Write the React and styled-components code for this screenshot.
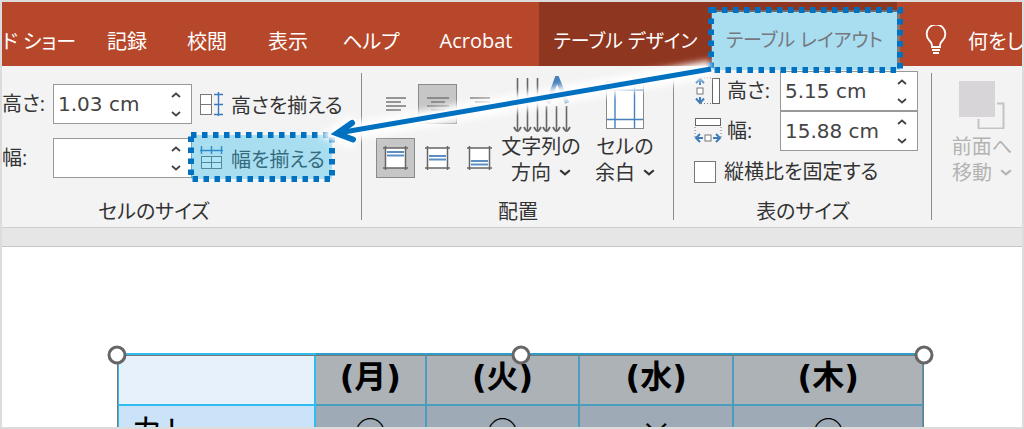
import React, { useState } from "react";
import styled, { createGlobalStyle } from "styled-components";

const TABS = ["ド ショー", "記録", "校閲", "表示", "ヘルプ", "Acrobat"];
const DAYS = ["(月)", "(火)", "(水)", "(木)"];
const MARKS = ["○", "○", "×", "○"];

function Spinner({ id, value, onChange }) {
  return (
    <SpinBox>
      <SpinInput
        id={id}
        type="text"
        value={value}
        onChange={(e) => onChange(e.target.value)}
      />
      <SpinButtons>
        <SpinButton type="button" aria-label="増やす">
          <svg width="10" height="6" viewBox="0 0 10 6">
            <path d="M1 5L5 1.5L9 5" fill="none" stroke="#444" strokeWidth="1.8" />
          </svg>
        </SpinButton>
        <SpinButton type="button" aria-label="減らす">
          <Chevron width={10} />
        </SpinButton>
      </SpinButtons>
    </SpinBox>
  );
}

function Chevron({ width = 12 }) {
  return (
    <svg width={width} height={width * 0.6} viewBox="0 0 10 6">
      <path d="M1 1L5 4.5L9 1" fill="none" stroke="currentColor" strokeWidth="1.8" />
    </svg>
  );
}

function Highlight({ inset }) {
  return (
    <HighlightBox $inset={inset} aria-hidden="true">
      <svg width="100%" height="100%">
        <rect
          width="100%"
          height="100%"
          fill="none"
          stroke="#0070c0"
          strokeWidth="6"
          strokeDasharray="5.5 5.5"
        />
      </svg>
    </HighlightBox>
  );
}

function RowsIcon() {
  return (
    <svg width="24" height="24" viewBox="0 0 24 24" fill="none">
      <rect x="1.5" y="2.5" width="11" height="20" fill="#fff" stroke="#777" />
      <path d="M1 12.5H13" stroke="#777" />
      <path d="M19.5 0V24M15 2.5H24M15 12.5H24M15 22.5H24" stroke="#3a7abf" strokeWidth="1.4" />
    </svg>
  );
}

function ColumnsIcon() {
  return (
    <svg width="24" height="24" viewBox="0 0 24 24" fill="none">
      <rect x="2.5" y="10.5" width="20" height="12" fill="#fff" stroke="#666" />
      <path d="M2 16.5H23M12.5 10V23" stroke="#666" />
      <path d="M1 4.5H24M2.5 0V8M12.5 0V8M22.5 0V8" stroke="#2a6ab5" strokeWidth="1.4" />
    </svg>
  );
}

function AlignIcon({ type }) {
  const d = {
    left: "M1 2H21M1 6H16M1 10H21M1 14H16",
    center: "M0 2H22M4 6H18M0 10H22M4 14H18",
    right: "M1 2H21M6 6H21M1 10H21M6 14H21",
  }[type];
  return (
    <svg width="22" height="16" viewBox="0 0 22 16">
      <path d={d} stroke="#777" strokeWidth="1.5" />
    </svg>
  );
}

function CellIcon({ type }) {
  const y = { top: 6, middle: 10, bottom: 15 }[type];
  return (
    <svg width="26" height="24" viewBox="0 0 26 24">
      <rect x="3" y="2" width="20" height="20" fill="#fff" />
      <path d="M0 2H25M0 22H25M2.5 0V24M22.5 0V24" stroke="#666" strokeWidth="1.5" />
      <path d={`M4 ${y}H21M4 ${y + 3.5}H21`} stroke="#5b8fc4" strokeWidth="1.8" />
    </svg>
  );
}

function DirectionIcon() {
  return (
    <svg width="60" height="58" viewBox="0 0 60 58" fill="none">
      <path d="M6.5 2V54M16.5 2V54M26.5 2V54M35.5 30V54M45.5 30V54M55.5 30V54" stroke="#666" strokeWidth="1.6" />
      <path
        d="M3 51Q5 55 6.5 55Q8 55 10 51M13 51Q15 55 16.5 55Q18 55 20 51M23 51Q25 55 26.5 55Q28 55 30 51M32 51Q34 55 35.5 55Q37 55 39 51M42 51Q44 55 45.5 55Q47 55 49 51M52 51Q54 55 55.5 55Q57 55 59 51"
        stroke="#666"
        strokeWidth="1.8"
      />
      <path d="M37 27L46 2L56 27M40 19H52" stroke="#4580ba" strokeWidth="4.5" />
    </svg>
  );
}

function MarginIcon() {
  return (
    <svg width="38" height="48" viewBox="0 0 38 48">
      <rect x="0.5" y="0.5" width="37" height="47" fill="#fff" stroke="#888" />
      <path d="M9 1V47M28.5 1V47M1 9H37M1 38.5H37" stroke="#4580ba" strokeWidth="1.4" />
    </svg>
  );
}

function HeightIcon() {
  return (
    <svg width="26" height="28" viewBox="0 0 26 28" fill="none">
      <rect x="18.5" y="1.5" width="7" height="25" fill="#fff" stroke="#666" />
      <path d="M7 1H18M7 26.5H18" stroke="#777" strokeDasharray="1 2" />
      <rect x="3" y="11" width="6" height="6" fill="#fff" stroke="#777" />
      <path d="M2 6L6 2L10 6M6 2V8M6 20V26M2 21.5L6 26L10 21.5" stroke="#3f7cba" strokeWidth="2" />
    </svg>
  );
}

function WidthIcon() {
  return (
    <svg width="28" height="26" viewBox="0 0 28 26" fill="none">
      <rect x="1.5" y="0.5" width="25" height="7" fill="#fff" stroke="#666" />
      <path d="M1 9V19M27 9V19" stroke="#777" strokeDasharray="1 2" />
      <rect x="11" y="17" width="6" height="6" fill="#fff" stroke="#777" />
      <path d="M6 16L2 20L6 24M2 20H9M19 20H26M22 16L26 20L22 24" stroke="#3f7cba" strokeWidth="2" />
    </svg>
  );
}

function BulbIcon() {
  return (
    <svg width="22" height="30" viewBox="0 0 22 30" fill="none" stroke="#fff" strokeWidth="1.8">
      <path d="M7 22V20Q7 18 4 15A9.300 9.300 0 1 1 18 15Q15 18 15 20V22Z" />
      <path d="M7 25H15M8 28H14" />
    </svg>
  );
}

function ForwardIcon() {
  return (
    <svg width="46" height="48" viewBox="0 0 46 48" fill="none">
      <rect x="19.5" y="22.5" width="25" height="25" fill="#f3f3f3" stroke="#c4c4c4" strokeWidth="2" />
      <rect width="38" height="38" fill="#f3f3f3" />
      <rect width="36" height="36" fill="#d8d5d9" />
    </svg>
  );
}

function Arrow() {
  return (
    <ArrowLayer width="1024" height="240" viewBox="0 0 1024 240" fill="none" aria-hidden="true">
      <defs>
        <filter id="glow" x="-10%" y="-60%" width="120%" height="220%">
          <feGaussianBlur stdDeviation="3" />
        </filter>
      </defs>
      <path
        d="M711 69L336 134M355 122L337 134L355 141"
        stroke="#fff"
        strokeWidth="17"
        filter="url(#glow)"
      />
      <path d="M711 69L338 133" stroke="#0070c0" strokeWidth="5" />
      <path d="M352 123L337 133.5L353 139.5" stroke="#0070c0" strokeWidth="6" strokeLinecap="round" />
    </ArrowLayer>
  );
}

function App() {
  const [cellHeight, setCellHeight] = useState("1.03 cm");
  const [cellWidth, setCellWidth] = useState("");
  const [tableHeight, setTableHeight] = useState("5.15 cm");
  const [tableWidth, setTableWidth] = useState("15.88 cm");
  const [locked, setLocked] = useState(false);

  return (
    <Window>
      <GlobalStyle />
      <TabBar>
        {TABS.map((tab) => (
          <Tab key={tab} type="button">
            {tab}
          </Tab>
        ))}
        <ContextTab type="button">テーブル デザイン</ContextTab>
        <ActiveTab type="button">
          テーブル レイアウト
          <Highlight inset="-2px -3px -4px -1px" />
        </ActiveTab>
        <TellMe type="button">
          <BulbIcon />
          何をしま
        </TellMe>
      </TabBar>

      <Ribbon>
        <Group>
          <CellSize>
            <Label htmlFor="cell-height">高さ:</Label>
            <Spinner id="cell-height" value={cellHeight} onChange={setCellHeight} />
            <Distribute type="button">
              <RowsIcon />
              高さを揃える
            </Distribute>
            <Label htmlFor="cell-width">幅:</Label>
            <Spinner id="cell-width" value={cellWidth} onChange={setCellWidth} />
            <Distribute type="button">
              <ColumnsIcon />
              幅を揃える
              <Highlight inset="-3px 0 -1px -3px" />
            </Distribute>
          </CellSize>
          <Caption>セルのサイズ</Caption>
        </Group>

        <Group>
          <Alignment>
            <AlignGrid>
              <AlignButton type="button" aria-label="左揃え">
                <AlignIcon type="left" />
              </AlignButton>
              <AlignButton type="button" aria-label="中央揃え" $pressed>
                <AlignIcon type="center" />
              </AlignButton>
              <AlignButton type="button" aria-label="右揃え">
                <AlignIcon type="right" />
              </AlignButton>
              <AlignButton type="button" aria-label="上揃え" $pressed>
                <CellIcon type="top" />
              </AlignButton>
              <AlignButton type="button" aria-label="上下中央揃え">
                <CellIcon type="middle" />
              </AlignButton>
              <AlignButton type="button" aria-label="下揃え">
                <CellIcon type="bottom" />
              </AlignButton>
            </AlignGrid>
            <BigButton type="button">
              <BigIcon>
                <DirectionIcon />
              </BigIcon>
              <span>文字列の</span>
              <BigLine>
                方向 <Chevron />
              </BigLine>
            </BigButton>
            <BigButton type="button">
              <BigIcon>
                <MarginIcon />
              </BigIcon>
              <span>セルの</span>
              <BigLine>
                余白 <Chevron />
              </BigLine>
            </BigButton>
          </Alignment>
          <Caption>配置</Caption>
        </Group>

        <Group>
          <TableSize>
            <SizeRow>
              <HeightIcon />
              <Label htmlFor="table-height">高さ:</Label>
              <Spinner id="table-height" value={tableHeight} onChange={setTableHeight} />
            </SizeRow>
            <SizeRow>
              <WidthIcon />
              <Label htmlFor="table-width">幅:</Label>
              <Spinner id="table-width" value={tableWidth} onChange={setTableWidth} />
            </SizeRow>
            <CheckRow>
              <CheckBox
                type="checkbox"
                checked={locked}
                onChange={(e) => setLocked(e.target.checked)}
              />
              縦横比を固定する
            </CheckRow>
          </TableSize>
          <Caption>表のサイズ</Caption>
        </Group>

        <Group>
          <Arrange>
            <BigButton type="button" disabled>
              <BigIcon>
                <ForwardIcon />
              </BigIcon>
              <span>前面へ</span>
              <BigLine>
                移動 <Chevron />
              </BigLine>
            </BigButton>
          </Arrange>
        </Group>
      </Ribbon>

      <Gutter />

      <Slide>
        <TableFrame>
          <Timetable>
            <colgroup>
              <Col $width={197} />
              <Col $width={112} />
              <Col $width={153} />
              <Col $width={155} />
              <Col $width={190} />
            </colgroup>
            <thead>
              <tr>
                <HeadCell $blank />
                {DAYS.map((day) => (
                  <HeadCell key={day}>{day}</HeadCell>
                ))}
              </tr>
            </thead>
            <tbody>
              <tr>
                <NameCell>カレー</NameCell>
                {MARKS.map((mark, i) => (
                  <MarkCell key={DAYS[i]}>{mark}</MarkCell>
                ))}
              </tr>
            </tbody>
          </Timetable>
          <Handle $at="0%" />
          <Handle $at="50%" />
          <Handle $at="100%" />
        </TableFrame>
      </Slide>
      <Arrow />
    </Window>
  );
}

export default App;

const GlobalStyle = createGlobalStyle`
  * {
    box-sizing: border-box;
  }

  body {
    margin: 0;
    font-family: "Open Sans", "Noto Sans CJK JP", sans-serif;
    font-feature-settings: "palt";
    font-size: 20px;
    color: #333;
  }

  button,
  input {
    font: inherit;
    font-feature-settings: inherit;
    color: inherit;
    padding: 0;
    margin: 0;
    border: none;
    background: none;
  }

  svg {
    flex: none;
    display: block;
  }
`;

const Window = styled.div`
  position: relative;
  display: flex;
  flex-direction: column;
  height: 100vh;
  overflow: hidden;
  border: 2px solid #dcdcdc;
  background: #fff;
  white-space: nowrap;
`;

const TabBar = styled.nav`
  display: grid;
  flex: none;
  grid-template-columns: 85fr 80fr 80fr 82fr 84fr 126fr 173fr 185fr 125fr;
  height: 64px;
  background: #b7472a;
`;

const Tab = styled.button`
  min-width: 0;
  padding-top: 12px;
  overflow: hidden;
  color: #fff;

  &:first-child {
    padding-right: 20px;
  }
`;

const ContextTab = styled(Tab)`
  background: #8f3620;
  font-size: 19px;
`;

const ActiveTab = styled.button`
  position: relative;
  min-width: 0;
  border-top: 10px solid #8f3620;
  background: #f3f3f3;
  font-size: 19px;
  color: #a04a34;
`;

const TellMe = styled.button`
  display: flex;
  align-items: center;
  gap: 21px;
  min-width: 0;
  padding: 12px 0 0 28px;
  overflow: hidden;
  color: #fff;
`;

const HighlightBox = styled.span`
  position: absolute;
  z-index: 1;
  inset: ${(props) => props.$inset};
  background: rgba(58, 190, 238, 0.4);

  svg {
    overflow: visible;
  }
`;

const Ribbon = styled.div`
  display: grid;
  flex: none;
  grid-template-columns: 360fr 312fr 258fr 90fr;
  height: 162px;
  border-bottom: 1px solid #d0d0d0;
  background: #f3f3f3;
`;

const Group = styled.section`
  position: relative;
  display: flex;
  flex-direction: column;
  justify-content: space-between;
  min-width: 0;

  &:not(:last-child)::after {
    content: "";
    position: absolute;
    top: 7px;
    right: 0;
    bottom: 7px;
    border-right: 1px solid #8c8c8c;
  }
`;

const Caption = styled.div`
  line-height: 30px;
  text-align: center;

  ${Group}:first-child & {
    padding-right: 56px;
  }
`;

const CellSize = styled.div`
  display: grid;
  grid-template-columns: 49px 139px 138px;
  row-gap: 14px;
  column-gap: 2px;
  padding-top: 18px;
`;

const Label = styled.label`
  align-self: center;
  line-height: 30px;
`;

const SpinBox = styled.div`
  display: flex;
  height: 40px;
  border: 1px solid #999;
  background: #fff;
`;

const SpinInput = styled.input`
  flex: 1;
  min-width: 0;
  padding-left: 4px;
  outline: none;
  font-family: "DejaVu Sans", sans-serif;
  color: #444;
`;

const SpinButtons = styled.div`
  display: flex;
  flex-direction: column;
  width: 30px;
`;

const SpinButton = styled.button`
  display: flex;
  flex: 1;
  align-items: center;
  justify-content: center;
  color: #444;
`;

const Distribute = styled.button`
  position: relative;
  display: flex;
  align-items: center;
  justify-content: flex-start;
  gap: 8px;
  padding-left: 5px;
`;

const Alignment = styled.div`
  display: flex;
  padding: 10px 0 0 14px;
`;

const AlignGrid = styled.div`
  display: grid;
  grid-template-columns: repeat(3, 39px);
  grid-template-rows: repeat(2, 40px);
  column-gap: 3px;
  row-gap: 14px;
  padding-top: 8px;
`;

const AlignButton = styled.button`
  display: flex;
  align-items: center;
  justify-content: center;
  border: 1px solid ${(props) => (props.$pressed ? "#8a8a8a" : "transparent")};
  background: ${(props) => (props.$pressed ? "#c6c6c6" : "transparent")};
`;

const BigButton = styled.button`
  display: flex;
  flex-direction: column;
  align-items: center;
  width: 84px;
  line-height: 26px;

  &:disabled {
    color: #b3b3b3;
  }
`;

const BigIcon = styled.span`
  display: flex;
  align-items: center;
  height: 58px;
`;

const BigLine = styled.span`
  display: flex;
  align-items: center;
  gap: 8px;
`;

const TableSize = styled.div`
  display: flex;
  flex-direction: column;
  padding: 5px 14px 0 20px;
`;

const SizeRow = styled.div`
  display: grid;
  grid-template-columns: 28px 48px 138px;
  column-gap: 5px;
  align-items: center;
`;

const CheckRow = styled.label`
  display: flex;
  align-items: center;
  gap: 8px;
  padding-top: 6px;
  line-height: 30px;
`;

const CheckBox = styled.input`
  appearance: none;
  width: 22px;
  height: 22px;
  border: 1px solid #777;
  background: #fff;
`;

const Arrange = styled.div`
  padding: 10px 0 0 8px;
`;

const Gutter = styled.div`
  flex: none;
  height: 19px;
  border-bottom: 1px solid #c6c6c6;
  background: #e6e6e6;
`;

const Slide = styled.main`
  flex: 1;
  min-height: 0;
  padding: 106px 98px 0 115px;
  overflow: hidden;
`;

const TableFrame = styled.div`
  position: relative;

  &::after {
    content: "";
    position: absolute;
    inset: 2px 0 0;
    border: 1px solid #777;
    border-bottom: none;
    pointer-events: none;
  }
`;

const Timetable = styled.table`
  width: 100%;
  table-layout: fixed;
  border-collapse: collapse;
  font-family: "DejaVu Sans", "Noto Sans CJK JP", sans-serif;
  font-feature-settings: normal;
  font-size: 32px;
  color: #000;
`;

const Col = styled.col`
  width: ${(props) => (props.$width * 100) / 807}%;
`;

const HeadCell = styled.th`
  height: 51px;
  padding: 0 0 6px;
  border: 2px solid ${(props) => (props.$blank ? "#2fbdf0" : "#4a9dbd")};
  border-top: 2px solid ${(props) => (props.$blank ? "#2fbdf0" : "#2b9fc9")};
  background: ${(props) => (props.$blank ? "#e7f1fc" : "#adb2b6")};
  line-height: 36px;
`;

const NameCell = styled.td`
  height: 51px;
  padding: 0 0 0 12px;
  border: 2px solid #2fbdf0;
  background: #cbe3f9;
  line-height: 40px;
`;

const MarkCell = styled.td`
  padding: 0;
  border: 2px solid #4a9dbd;
  background: #9eaab6;
  font-family: "Noto Sans CJK JP", sans-serif;
  line-height: 46px;
  text-align: center;
`;

const Handle = styled.span`
  position: absolute;
  z-index: 1;
  top: 2px;
  left: ${(props) => props.$at};
  width: 19px;
  height: 19px;
  border: 3px solid #666;
  border-radius: 50%;
  background: #fff;
  transform: translate(-50%, -50%);
`;

const ArrowLayer = styled.svg`
  position: absolute;
  z-index: 2;
  top: -2px;
  left: -2px;
  pointer-events: none;
`;
